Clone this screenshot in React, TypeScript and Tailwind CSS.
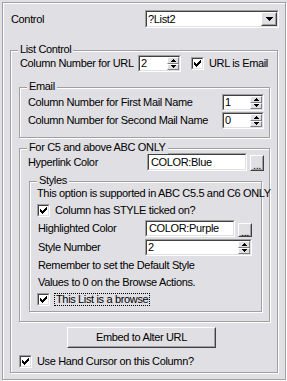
import React from 'react';

type Props = { className?: string; children?: React.ReactNode };

// sunken 2px win-classic edge
function Sunken({ className = '', children }: Props) {
  return (
    <div className={`border border-t-[#a0a0a0] border-l-[#a0a0a0] border-r-white border-b-white ${className}`}>
      <div className="flex h-full w-full border border-t-[#404040] border-l-[#404040] border-r-[#e0dfe3] border-b-[#e0dfe3] bg-white">
        {children}
      </div>
    </div>
  );
}

function Raised({ className = '', children }: Props) {
  return (
    <div className={`border border-t-white border-l-white border-r-[#404040] border-b-[#404040] bg-[#e0dfe3] ${className}`}>
      <div className="flex h-full w-full items-center justify-center border border-t-[#e0dfe3] border-l-[#e0dfe3] border-r-[#a0a0a0] border-b-[#a0a0a0]">
        {children}
      </div>
    </div>
  );
}

function Group({ label, className = '', children }: Props & { label: string }) {
  return (
    <div className={`relative border border-[#a0a0a0] shadow-[inset_1px_1px_0_#fff,1px_1px_0_#fff] ${className}`}>
      <span className="absolute left-[7px] top-[-8px] bg-[#e0dfe3] px-[2px] leading-[13px]">{label}</span>
      {children}
    </div>
  );
}

function CheckBox() {
  return (
    <Sunken className="h-[13px] w-[13px] shrink-0">
      <svg width="7" height="7" className="ml-[1px] mt-[1px]" shapeRendering="crispEdges">
        <path d="M0 2h1v1h1v1h1V3h1V2h1V1h1V0h1v3H6v1H5v1H4v1H3v1H2V6H1V5H0z" fill="#000" />
      </svg>
    </Sunken>
  );
}

function Spin({ value, className = '' }: { value: string; className?: string }) {
  return (
    <Sunken className={`h-[17px] ${className}`}>
      <span className="flex-1 pl-[1px] leading-[13px]">{value}</span>
      <div className="flex w-[12px] flex-col">
        <div className="flex flex-1 items-center justify-center border border-t-white border-l-white border-r-[#808080] border-b-[#808080] bg-[#e0dfe3]">
          <svg width="5" height="3" shapeRendering="crispEdges"><path d="M2 0h1v1h1v1h1v1H0V2h1V1h1z" fill="#000" /></svg>
        </div>
        <div className="flex flex-1 items-center justify-center border border-t-white border-l-white border-r-[#808080] border-b-[#808080] bg-[#e0dfe3]">
          <svg width="5" height="3" shapeRendering="crispEdges"><path d="M0 0h5v1H4v1H3v1H2V2H1V1H0z" fill="#000" /></svg>
        </div>
      </div>
    </Sunken>
  );
}

function Ellipsis({ className = '' }: { className?: string }) {
  return (
    <Raised className={`w-[14px] ${className}`}>
      <span className="mt-[3px] leading-[10px]">...</span>
    </Raised>
  );
}

export default function App() {
  return (
    <div className="h-[381px] w-[287px] overflow-hidden bg-[#e0dfe3] pl-[2px] pt-[2px] font-['Liberation_Sans',Arial,sans-serif] text-[11px] leading-[13px] tracking-[-0.35px] text-black whitespace-nowrap">
      <div className="h-[378px] w-[284px] border border-[#a0a0a0] pt-[7px] shadow-[inset_1px_1px_0_#fff,1px_1px_0_#fff]">
        {/* Control */}
        <div className="flex items-center">
          <span className="w-[142px] pl-[8px]">Control</span>
          <Sunken className="h-[18px] w-[134px]">
            <span className="flex-1 pl-[1px] leading-[14px]">?List2</span>
            <Raised className="w-[16px]">
              <svg width="7" height="4" shapeRendering="crispEdges"><path d="M0 0h7v1H6v1H5v1H4v1H3V3H2V2H1V1H0z" fill="#000" /></svg>
            </Raised>
          </Sunken>
        </div>

        <Group label="List Control" className="ml-[7px] mt-[22px] w-[268px] pb-[4px] pt-[4px]">
          <div className="flex h-[17px] items-center pl-[9px]">
            <span className="w-[118px]">Column Number for URL</span>
            <Spin value="2" className="w-[43px]" />
            <span className="w-[10px]" />
            <CheckBox />
            <span className="ml-[5px]">URL is Email</span>
          </div>

          <Group label="Email" className="ml-[8px] mt-[15px] w-[251px] pb-[8px] pt-[6px]">
            <div className="flex h-[17px] items-center pl-[8px]">
              <span className="w-[194px]">Column Number for First Mail Name</span>
              <Spin value="1" className="w-[42px]" />
            </div>
            <div className="mt-[1px] flex h-[17px] items-center pl-[8px]">
              <span className="w-[194px]">Column Number for Second Mail Name</span>
              <Spin value="0" className="w-[42px]" />
            </div>
          </Group>

          <Group label="For C5 and above ABC ONLY" className="ml-[8px] mt-[10px] w-[251px] pb-[9px] pt-[4px]">
            <div className="flex h-[18px] items-center pl-[8px]">
              <span className="w-[119px]">Hyperlink Color</span>
              <Sunken className="h-[18px] w-[100px]">
                <span className="pl-[2px] leading-[14px]">COLOR:Blue</span>
              </Sunken>
              <Ellipsis className="ml-[3px] h-[16px] self-end" />
            </div>

            <Group label="Styles" className="ml-[9px] mt-[10px] w-[233px] pb-[5px] pt-[5px]">
              <div className="flex h-[13px] items-center pl-[7px]">This option is supported in ABC C5.5 and C6 ONLY</div>
              <div className="mt-[4px] flex h-[13px] items-center pl-[7px]">
                <CheckBox />
                <span className="ml-[5px]">Column has STYLE ticked on?</span>
              </div>
              <div className="mt-[3px] flex h-[17px] items-center pl-[8px]">
                <span className="w-[107px]">Highlighted Color</span>
                <Sunken className="h-[17px] w-[90px]">
                  <span className="pl-[2px] leading-[13px]">COLOR:Purple</span>
                </Sunken>
                <Ellipsis className="ml-[3px] h-[14px] self-end" />
              </div>
              <div className="mt-[2px] flex h-[17px] items-center pl-[8px]">
                <span className="w-[107px]">Style Number</span>
                <Spin value="2" className="w-[107px]" />
              </div>
              <div className="mt-[3px] flex h-[13px] items-center pl-[8px]">Remember to set the Default Style</div>
              <div className="mt-[4px] flex h-[13px] items-center pl-[8px]">Values to 0 on the Browse Actions.</div>
              <div className="mt-[4px] flex h-[13px] items-center pl-[7px]">
                <CheckBox />
                <span className="ml-[4px] border border-dotted border-black px-[1px] leading-[11px]">This List is a browse</span>
              </div>
            </Group>
          </Group>

          <Raised className="ml-[56px] mt-[5px] h-[21px] w-[149px]">
            <span>Embed to Alter URL</span>
          </Raised>

          <div className="mt-[7px] flex h-[13px] items-center pl-[8px]">
            <CheckBox />
            <span className="ml-[5px]">Use Hand Cursor on this Column?</span>
          </div>
        </Group>
      </div>
    </div>
  );
}
